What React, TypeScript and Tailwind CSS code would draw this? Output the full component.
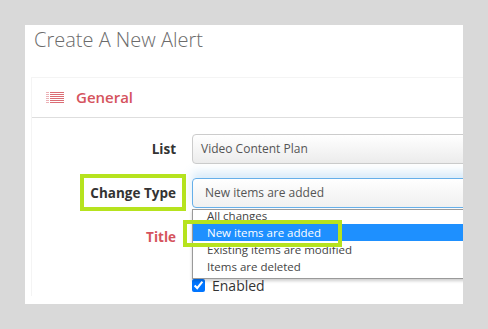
const options = ['All changes', 'New items are added', 'Existing items are modified', 'Items are deleted'];

const ListIcon = () => (
    <svg width="18" height="11" viewBox="0 0 18 11" className="ml-[14px] text-[#d5535d] block" fill="currentColor" shapeRendering="crispEdges">
        {[0, 2, 4, 6, 8, 10].map(y => (
            <g key={y}>
                <rect x="0" y={y} width="3" height="1" opacity="0.45" />
                <rect x="4" y={y} width="14" height="1" opacity="0.85" />
            </g>
        ))}
    </svg>
);

const Field = ({ label, red, children }: { label: React.ReactNode; red?: boolean; children: React.ReactNode }) => (
    <div className="flex items-center h-[30px]">
        <div className={`w-[144px] shrink-0 text-right text-[13.5px] font-bold ${red ? 'text-[#d5535d]' : 'text-[#333]'}`}>
            {label}
        </div>
        <div className="ml-[16px] flex-1 relative h-full">{children}</div>
    </div>
);

const App = () => {
    return (
        <div className="w-[488px] h-[329px] bg-[#d9d9d9] pt-[25px] pl-[25px]" style={{ fontFamily: '"Open Sans", "Liberation Sans", sans-serif' }}>
            <div className="w-[438px] h-[279px] bg-white overflow-hidden">
                <h1 className="pl-[9px] pt-[1px] text-[20px] leading-[28px] font-light text-[#6b6b6b]">Create A New Alert</h1>
                <div className="ml-[6px] mt-[23px] w-[460px] border-t border-l border-[#f4f4f4]">
                    <div className="h-[40px] flex items-center border-b border-[#dedede]">
                        <ListIcon />
                        <span className="ml-[12px] text-[15px] font-semibold text-[#d5535d]">General</span>
                    </div>
                    <div className="pt-[16px] flex flex-col gap-[14px]">
                        <Field label="List">
                            <div className="h-full w-[320px] flex items-center pl-[8px] text-[12px] text-[#555] border border-[#ccc] rounded-[4px] bg-gradient-to-b from-white to-[#ececec]">
                                Video Content Plan
                            </div>
                        </Field>
                        <Field
                            label={
                                <span className="relative">
                                    Change Type
                                    <span className="absolute -left-[10px] -right-[10px] -top-[10px] -bottom-[9px] border-[4px] border-[#b6e31e]" />
                                </span>
                            }
                        >
                            <div className="h-full w-[320px] flex items-center pl-[12px] text-[12px] text-[#555] border border-[#66afe9] rounded-[4px] bg-gradient-to-b from-white to-[#f0f0f0] shadow-[0_-6px_10px_rgba(102,175,233,0.25)]">
                                New items are added
                            </div>
                            <div className="absolute z-10 left-0 top-[31px] w-[320px] h-[70px] bg-white border border-[#9a9a9a] shadow-[0_2px_3px_rgba(0,0,0,0.2)] overflow-hidden text-[11.5px] text-[#444]">
                                <div className="-mt-[3px]">
                                    {options.map(o => (
                                        <div
                                            key={o}
                                            className={`h-[17px] leading-[17px] pl-[14px] ${o === 'New items are added' ? 'bg-[#1e90ff] text-white' : ''}`}
                                        >
                                            {o}
                                        </div>
                                    ))}
                                </div>
                            </div>
                            <div className="absolute z-20 left-[-9px] top-[42px] w-[159px] h-[27px] border-[4px] border-[#b6e31e]" />
                        </Field>
                        <Field label="Title" red>
                            <div className="h-full" />
                        </Field>
                    </div>
                    <label className="flex items-center ml-[160px] mt-[23px] gap-[7px] text-[14px] text-[#333]">
                        <input type="checkbox" defaultChecked className="w-[13px] h-[13px] accent-[#0075ff]" />
                        Enabled
                    </label>
                </div>
            </div>
        </div>
    );
};

export default App;
